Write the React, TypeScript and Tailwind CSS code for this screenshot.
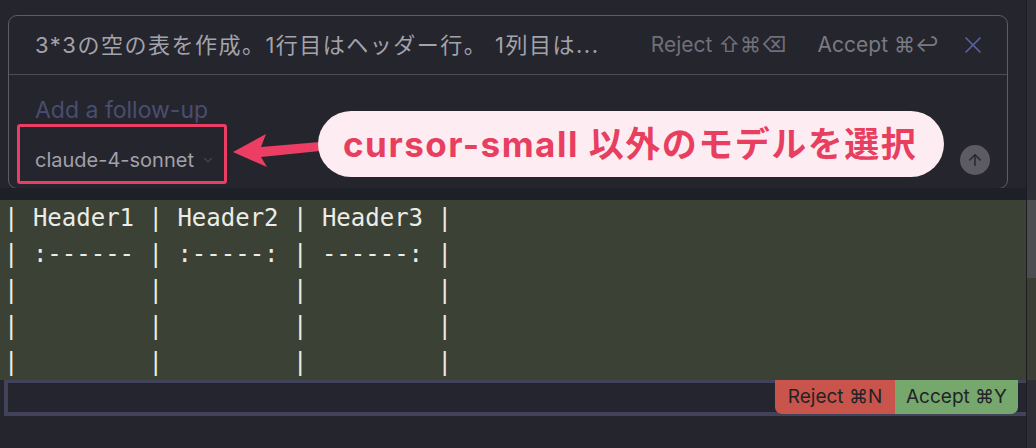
import { X, ChevronDown, ArrowUp } from "lucide-react";

const ui = { fontFamily: "Inter, 'Noto Sans CJK JP', sans-serif" };
const mono = { fontFamily: "'DejaVu Sans Mono', monospace" };

const codeLines = [
  "| Header1 | Header2 | Header3 |",
  "| :------ | :-----: | ------: |",
  "|         |         |         |",
  "|         |         |         |",
  "|         |         |         |",
];

export default function App() {
  return (
    <div className="relative w-[1036px] h-[448px] overflow-hidden bg-[#25252e] flex" style={ui}>
      <div className="w-[1026px] flex flex-col">
        {/* inline prompt widget */}
        <div className="h-[188px] pt-[15px] pl-[8px] pr-[18px]">
          <div className="h-[174px] rounded-[9px] border border-[#5d5d66] flex flex-col">
            <div className="h-[59px] flex items-center pl-[26px] pr-[20px] border-b border-[#4e4e57]">
              <span className="text-[22px] text-[#a3a3ab] tracking-[1.5px]">
                3*3の空の表を作成。1行目はヘッダー行。 1列目は...
              </span>
              <span className="ml-auto text-[21px] text-[#707079]">Reject ⇧⌘⌫</span>
              <span className="ml-[31px] text-[21px] text-[#7a7a82]">Accept ⌘↩</span>
              <X className="ml-[20px] w-[28px] h-[28px] text-[#5b5f9c]" strokeWidth={1.5} />
            </div>
            <div className="flex-1 flex flex-col pl-[26px] pr-[17px]">
              <div className="mt-[18px] text-[23px] text-[#4a4d6e]">Add a follow-up</div>
              <div className="mt-[17px] flex items-center">
                <span className="text-[20px] text-[#a1a1a9]">claude-4-sonnet</span>
                <ChevronDown className="ml-[7px] w-[14px] h-[14px] text-[#65656e]" strokeWidth={1.5} />
                <div className="ml-auto w-[30px] h-[30px] rounded-full bg-[#5b5b61] flex items-center justify-center">
                  <ArrowUp className="w-[18px] h-[18px] text-[#26262c]" strokeWidth={2} />
                </div>
              </div>
            </div>
          </div>
        </div>
        <div className="h-[12px] bg-[#1f2027]" />

        {/* diff region */}
        <div className="h-[180px] bg-[#3c4136] pl-[4px] text-[24px] leading-[36px] text-[#ecece6] whitespace-pre" style={mono}>
          {codeLines.map((l, i) => (
            <div key={i}>{l}</div>
          ))}
        </div>
        <div className="relative ml-[4px] h-[36px] border-t-[3px] border-l-[4px] border-b-[4px] border-[#42425a] bg-[#25252f]">
          <div className="absolute right-[8px] top-[-3px] flex text-[19px] text-[#222327]">
            <div className="w-[120px] h-[34px] rounded-bl-[7px] bg-[#c9544b] flex items-center justify-center">Reject ⌘N</div>
            <div className="w-[123px] h-[34px] rounded-br-[7px] bg-[#76a76d] flex items-center justify-center">Accept ⌘Y</div>
          </div>
        </div>
      </div>

      {/* scrollbar */}
      <div className="w-[10px] flex flex-col bg-[#2e2f35] border-l border-[#1c1d22]">
        <div className="h-[200px]" />
        <div className="h-[78px] bg-[#4c4d50]" />
        <div className="h-[102px] bg-[#3a3e34]" />
      </div>

      {/* annotation */}
      <div className="absolute left-[17px] top-[124px] w-[210px] h-[60px] border-[3px] border-[#ec3e64] rounded-[3px]" />
      <svg className="absolute left-0 top-0" width="1036" height="448" viewBox="0 0 1036 448">
        <polygon points="233,152 266,134 261,147 320,142 320,151 261,157 267,167" fill="#ec3e64" />
      </svg>
      <div className="absolute left-[318px] top-[111px] w-[626px] h-[66px] rounded-full bg-[#fdedf2] flex items-center pl-[25px]">
        <span className="text-[35px] font-bold text-[#e83e60] tracking-[1.5px]">cursor-small 以外のモデルを選択</span>
      </div>
    </div>
  );
}
